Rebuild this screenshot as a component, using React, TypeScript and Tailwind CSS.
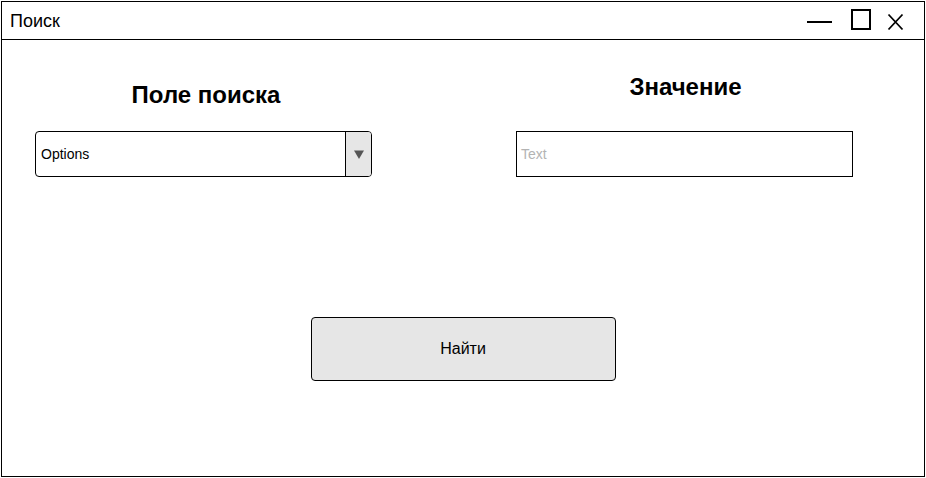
import React from "react";

// Window chrome: minimize / maximize / close drawn as one strip
function WindowControls() {
  return (
    <svg width="100" height="37" viewBox="0 0 100 37" className="mr-[19px] shrink-0">
      <rect x="2" y="19" width="25" height="2" fill="#000" />
      <rect x="47" y="8" width="18" height="19" fill="none" stroke="#000" strokeWidth="2" />
      <path d="M83.5 12.5 L97.5 27.5 M97.5 12.5 L83.5 27.5" stroke="#000" strokeWidth="1.8" fill="none" />
    </svg>
  );
}

export default function App() {
  return (
    <div
      className="w-[926px] h-[478px] bg-white pl-px pt-px"
      style={{ fontFamily: '"Liberation Sans", Arial, sans-serif' }}
    >
      <div className="w-[924px] h-[476px] border border-black flex flex-col">
        {/* Title bar */}
        <div className="h-[38px] border-b border-black flex items-center justify-between shrink-0">
          <span className="pl-[8px] text-[18px] leading-[20px] text-black">Поиск</span>
          <WindowControls />
        </div>

        {/* Body */}
        <div className="flex flex-col flex-1">
          <div className="flex pl-[33px] gap-[144px]">
            {/* Search field */}
            <div className="flex flex-col w-[337px]">
              <div className="h-[91px] flex flex-col justify-end pb-[23px]">
                <h2 className="text-center font-bold text-[24px] leading-[26px] text-black pl-[5px]">
                  Поле поиска
                </h2>
              </div>
              <div className="h-[46px] border border-black rounded-[4px] flex overflow-hidden">
                <div className="flex-1 flex items-center pl-[5px] text-[14px] leading-[16px] text-black">
                  Options
                </div>
                <div className="w-[26px] bg-[#e6e6e6] border-l border-black flex items-center justify-center">
                  <svg width="10" height="9" viewBox="0 0 10 9">
                    <path d="M0 0.5 L10 0.5 L5 9 Z" fill="#555" />
                  </svg>
                </div>
              </div>
            </div>

            {/* Value */}
            <div className="flex flex-col w-[337px]">
              <div className="h-[91px] flex flex-col justify-end pb-[31px]">
                <h2 className="text-center font-bold text-[24px] leading-[26px] text-black pl-[2px]">
                  Значение
                </h2>
              </div>
              <div className="h-[46px] border border-black flex items-center pl-[4px] text-[14px] leading-[16px] text-[#b3b3b3]">
                Text
              </div>
            </div>
          </div>

          <div className="flex justify-center mt-[140px]">
            <button className="w-[305px] h-[64px] bg-[#e6e6e6] border border-black rounded-[4px] text-[16px] text-black flex items-center justify-center">
              Найти
            </button>
          </div>
        </div>
      </div>
    </div>
  );
}
